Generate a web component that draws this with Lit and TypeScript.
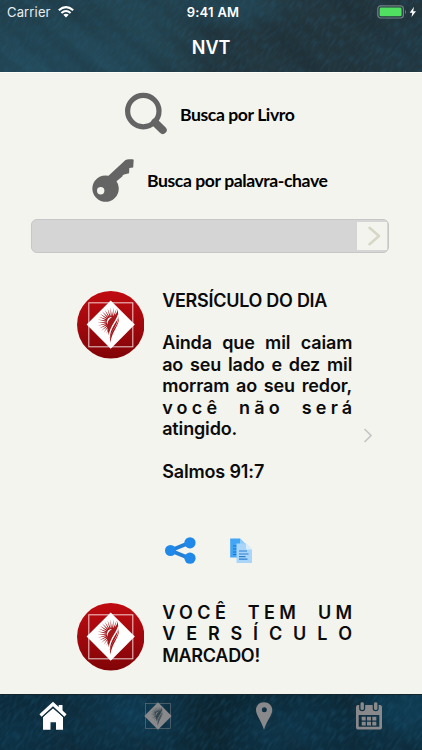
import { LitElement, html, svg, css } from "lit";
import { customElement, property } from "lit/decorators.js";

const rays = Array.from({ length: 16 }, (_, i) => {
  const a = ((70 + i * 12.5) * Math.PI) / 180;
  const dx = Math.cos(a);
  const dy = -Math.sin(a);
  const px = -dy * 0.65;
  const py = dx * 0.65;
  const cx = 34.8;
  const cy = 31;
  const len = 14.5 - Math.max(0, i - 10) * 0.4;
  return `M${cx + dx * 5 + px} ${cy + dy * 5 + py}L${cx + dx * len} ${cy + dy * len}L${cx + dx * 5 - px} ${cy + dy * 5 - py}Z`;
}).join("");

const emblem = (light: string, ink: string) => svg`
  <rect x="11.8" y="11.8" width="44" height="44" fill="none" stroke=${light} stroke-width="1.1" opacity=".75"/>
  <path d="M33.7 9.5 57.8 33.6 33.7 57.8 9.6 33.6Z" fill=${light}/>
  <path d=${rays} fill=${ink}/>
  <path d="M40.500 18C40.500 22 38 24.500 35 26C31 28.500 29.500 33 30.500 38C31 42.500 32.500 45.500 33.200 47.500C33.500 42 38 37 40 31.500C41.500 27 41.500 22 40.500 18Z" fill=${ink}/>
  <path d="M41.300 24C40 31 32.500 35.500 32.300 46" fill="none" stroke=${light} stroke-width="1.4"/>
  <path d="M42 25C43 34 35.500 39 33.300 51.500C32.300 45 34.800 41 37.500 37C40 33.500 41.600 30 42 25Z" fill=${ink}/>`;

@customElement("round-emblem")
export class RoundEmblem extends LitElement {
  static styles = css`
    :host { display: block; width: 67.5px; height: 67.5px; flex: none; }
    svg { display: block; width: 100%; height: 100%; }
  `;
  render() {
    return html`<svg viewBox="0 0 67.5 67.5">
      <defs><linearGradient id="red" x1="0" y1="0" x2="0" y2="1">
        <stop offset="0" stop-color="#c00b10"/><stop offset=".5" stop-color="#a1080d"/><stop offset="1" stop-color="#810407"/>
      </linearGradient></defs>
      <circle cx="33.75" cy="33.75" r="33.7" fill="url(#red)"/>
      ${emblem("#ffffff", "#a4171b")}
    </svg>`;
  }
}

@customElement("fabric-texture")
export class FabricTexture extends LitElement {
  @property() tone = "top";
  static styles = css`
    :host { display: block; position: absolute; inset: 0; overflow: hidden; }
    svg { display: block; width: 100%; height: 100%; }
    .top { background:
      radial-gradient(ellipse 130px 45px at 45px 60px, rgba(38, 88, 110, .4), transparent),
      radial-gradient(ellipse 70px 26px at 235px 8px, rgba(36, 88, 110, .5), transparent),
      radial-gradient(ellipse 60px 40px at 405px 50px, rgba(32, 66, 84, .4), transparent),
      linear-gradient(100deg, #22424f 0%, #244552 37%, #23373f 52%, #23343b 100%); }
    .bottom { background:
      radial-gradient(ellipse 70px 40px at 130px 20px, rgba(16, 66, 94, .65), transparent),
      radial-gradient(ellipse 70px 40px at 285px 35px, rgba(16, 66, 94, .6), transparent),
      radial-gradient(ellipse 60px 40px at 405px 15px, rgba(16, 70, 98, .7), transparent),
      radial-gradient(ellipse 60px 30px at 20px 40px, rgba(12, 56, 80, .6), transparent),
      linear-gradient(90deg, #0c2c3d, #0d2e3f 40%, #0b2633 50%, #0d2e3f); }
  `;
  render() {
    return html`<svg class=${this.tone} viewBox="0 0 422 72" preserveAspectRatio="xMinYMin slice">
      <defs>
        <filter id="weave" x="0" y="0" width="100%" height="100%" color-interpolation-filters="sRGB">
          <feTurbulence type="fractalNoise" baseFrequency=".13 .36" numOctaves="1" seed="4"/>
          <feColorMatrix values="0 0 0 0 .14  0 0 0 0 .38  0 0 0 0 .5  2.4 0 0 0 -1"/>
        </filter>
        <filter id="folds" x="0" y="0" width="100%" height="100%" color-interpolation-filters="sRGB">
          <feTurbulence type="fractalNoise" baseFrequency=".012 .06" numOctaves="1" seed="9"/>
          <feColorMatrix values="0 0 0 0 .09  0 0 0 0 .13  0 0 0 0 .16  2.5 0 0 0 -1.1"/>
        </filter>
      </defs>
      <rect x="-300" y="-400" width="1000" height="900" transform="rotate(-55 211 36)" filter="url(#weave)" opacity=".32"/>
      <rect x="-300" y="-400" width="1000" height="900" transform="rotate(40 211 36)" filter="url(#folds)" opacity=".3"/>
    </svg>`;
  }
}

@customElement("app-root")
export class AppRoot extends LitElement {
  static styles = css`
    :host {
      display: flex; flex-direction: column; width: 422px; height: 750px; overflow: hidden;
      box-sizing: border-box; background: #f3f4ee; color: #0b0b0b;
      font-family: Inter, "Liberation Sans", sans-serif;
    }
    svg { display: block; flex: none; }
    header { position: relative; height: 73px; flex: none; color: #fff; border-bottom: 1px solid #fcfbf5; box-sizing: border-box; }
    .status { position: relative; display: grid; grid-template-columns: 1fr auto 1fr; align-items: center; height: 24px; padding: 0 5px 0 7px; font-size: 13px; line-height: 24px; }
    .left, .right { display: flex; align-items: center; }
    .left { gap: 7px; color: #e8edef; letter-spacing: .15px; }
    .right { justify-content: flex-end; }
    .clock { font-weight: 600; letter-spacing: .25px; padding-left: 2px; }
    h1 { position: relative; margin: 13px 0 0; text-align: center; font-size: 18px; font-weight: 600; line-height: 22px; letter-spacing: -.1px; }
    main { flex: 1; display: flex; flex-direction: column; min-height: 0; }
    .action { display: flex; align-items: center; font-family: Lato, sans-serif; font-weight: 700; font-size: 17.6px; line-height: 22px; color: #000; white-space: nowrap; letter-spacing: -.42px; }
    .action span { padding-top: 2px; }
    .book { padding: 19px 0 0 124px; gap: 13px; height: 43px; }
    .keyword { padding: 23px 0 0 91px; gap: 13px; height: 44px; }
    .search { display: flex; justify-content: flex-end; margin: 17px 33px 0 30.5px; height: 34px; box-sizing: border-box; border: 1.5px solid #c6c7c6; border-radius: 6px; background: #d5d5d5; padding: 2px 1px 2px 0; }
    .go { width: 30px; background: #f3f4ee; display: flex; align-items: center; justify-content: center; padding-left: 1px; box-sizing: border-box; }
    .go svg { margin-left: 2px; }
    .card { display: grid; grid-template-columns: 67.5px 190px 1fr; column-gap: 18px; padding-left: 76.7px; }
    .daily { margin-top: 36px; height: 194px; }
    .tools { display: flex; gap: 34px; margin-top: 54px; padding-left: 165px; height: 27px; align-items: center; }
    .marked { margin-top: 37px; }
    .card round-emblem { margin-top: 2px; }
    .copy { padding-top: .6px; font-size: 18px; line-height: 21.4px; font-weight: 560; letter-spacing: -.15px; white-space: nowrap; }
    .marked .copy { padding-top: 1px; }
    .copy p { margin: 0; }
    .copy p + p { margin-top: 21.4px; }
    .full { display: block; text-align: justify; text-align-last: justify; }
    .voce { letter-spacing: 4.2px; margin-right: -4.2px; }
    .tem { letter-spacing: 4.4px; margin-right: -4.4px; }
    .wide { display: flex; justify-content: space-between; letter-spacing: 0; }
    .title { letter-spacing: -.28px; }
    .more { align-self: start; margin: 139px 0 0 -7px; }
    nav { position: relative; flex: none; height: 56px; box-sizing: border-box; border-top: 1px solid #14252c; display: grid; grid-template-columns: repeat(4, 1fr); justify-items: center; }
    nav svg { position: relative; }
    .tab-emblem { margin-top: 7px; }
  `;

  render() {
    return html`
      <header>
        <fabric-texture tone="top"></fabric-texture>
        <div class="status">
          <div class="left"><span>Carrier</span>
            <svg width="16" height="12" viewBox="0 0 16 12" fill="none" stroke="#fff" stroke-width="2.1">
              <path d="M.8 4.2Q8-2 15.2 4.2M3.4 7Q8 3 12.6 7"/>
              <path d="M8 11.5 5.3 8.8Q8 6.7 10.7 8.8Z" fill="#fff" stroke="none"/>
            </svg>
          </div>
          <span class="clock">9:41 AM</span>
          <div class="right">
            <svg width="40" height="14" viewBox="0 0 40 14">
              <rect x=".8" y=".8" width="25.6" height="12.2" rx="3" fill="none" stroke="#718085" stroke-width="1.2"/>
              <rect x="2.6" y="2.6" width="22" height="8.6" rx="1.3" fill="#51df62"/>
              <path d="M28 4.8Q30 7 28 9.2Z" fill="#718085"/>
              <path d="M37 1.800 32.700 7.700H35.300L34.500 12 39 6.200H36.200Z" fill="#fff"/>
            </svg>
          </div>
        </div>
        <h1>NVT</h1>
      </header>
      <main>
        <div class="action book">
          <svg width="43" height="43" viewBox="0 0 43 43" fill="none" stroke="#646464">
            <circle cx="19.3" cy="19.1" r="15.7" stroke-width="5.2"/>
            <path d="M31 30.500 38.700 38" stroke-width="8" stroke-linecap="round"/>
          </svg>
          <span>Busca por Livro</span>
        </div>
        <div class="action keyword">
          <svg width="43" height="43" viewBox="0 0 43 43" fill="#646464">
            <path fill-rule="evenodd" d="M17.500 16.800 34.500 1Q36 .2 38 .2H41.500Q43 .3 42.600 2L42.200 8.500L38.300 9.100L38.100 14.200L33 15.400L31.600 16.400L31.300 17.600L25.500 22.300A13.200 13.200 0 1 1 17.500 16.800ZM9.700 28A3.700 3.700 0 1 0 9.700 35.400A3.700 3.700 0 1 0 9.700 28Z"/>
          </svg>
          <span>Busca por palavra-chave</span>
        </div>
        <div class="search"><div class="go">
          <svg width="14" height="20" viewBox="0 0 14 20" fill="none" stroke="#d7d7c5" stroke-width="2.6" stroke-linecap="round" stroke-linejoin="round"><path d="M2.500 1.800 12 10 2.500 18.200"/></svg>
        </div></div>
        <section class="card daily">
          <round-emblem></round-emblem>
          <div class="copy">
            <p class="title">VERSÍCULO DO DIA</p>
            <p><span class="full">Ainda que mil caiam</span><span class="full">ao seu lado e dez mil</span><span class="full">morram ao seu redor,</span><span class="full voce">você não será</span><span>atingido.</span></p>
            <p>Salmos 91:7</p>
          </div>
          <svg class="more" width="10" height="15" viewBox="0 0 10 15" fill="none" stroke="#c5c6c5" stroke-width="1.7"><path d="M1.500 1 8 7.500 1.500 14"/></svg>
        </section>
        <div class="tools">
          <svg width="31" height="27" viewBox="0 0 31 27">
            <path d="M25 5.500 5.500 13.500 25 21.500" fill="none" stroke="#2380d6" stroke-width="4"/>
            <g fill="#2088e8"><circle cx="5.5" cy="13.5" r="5.5"/><circle cx="25" cy="5.8" r="5.6"/><circle cx="25" cy="21.2" r="5.6"/></g>
          </svg>
          <svg width="23" height="26" viewBox="0 0 23 26">
            <path d="M.2.5H10L15.500 6V19.500H.2Z" fill="#42a5f5"/><path d="M10 .5V6H15.500Z" fill="#90caf9"/>
            <path d="M3 8H7M3 11H7M3 14H7M3 16.500H7" stroke="#1976d2" stroke-width="1.1"/>
            <path d="M6.500 5.500H16L22 11.500V25H6.500Z" fill="#a9d5fa"/><path d="M16 5.500V11.500H22Z" fill="#d9edfe"/>
            <path d="M9 13H17M9 16H18.500M9 18.700H15.500M9 21.200H17.500" stroke="#2880d0" stroke-width="1.2"/>
          </svg>
        </div>
        <section class="card marked">
          <round-emblem></round-emblem>
          <div class="copy"><span class="full tem">VOCÊ TEM UM</span><span class="full wide">${[..."VERSÍCULO"].map((c) => html`<span>${c}</span>`)}</span><span class="title">MARCADO!</span></div>
        </section>
      </main>
      <nav>
        <fabric-texture tone="bottom"></fabric-texture>
        <svg width="28" height="40" viewBox="0 0 28 40" fill="#fff">
          <path d="M1.500 20.500 14 9 26.500 20.500" fill="none" stroke="#fff" stroke-width="3.2"/>
          <path d="M19.700 10H23.500V17L19.700 13.500ZM4 22 14 13.300 24 22V34.800H17V27.300H11.500V34.800H4Z"/>
          <path d="M2.800 22.700 14 12.500 25.200 22.700" fill="none" stroke="#0d2b3b" stroke-width=".9"/>
        </svg>
        <svg class="tab-emblem" width="28" height="28" viewBox="9 8.9 49.5 49.5">${emblem("#89898b", "#32444e")}</svg>
        <svg width="18" height="40" viewBox="0 0 18 40"><path fill="#89898b" fill-rule="evenodd" d="M9 7.200C4.200 7.200 1 10.700 1 15C1 20 6.500 26 9 34.800C11.500 26 17.300 20 17.300 15C17.300 10.700 13.800 7.200 9 7.200ZM9.300 12.300A2.500 2.500 0 1 1 9.300 17.300A2.500 2.500 0 1 1 9.300 12.300Z"/></svg>
        <svg width="28" height="40" viewBox="0 0 28 40">
          <path fill="#89898b" fill-rule="evenodd" d="M3 10H4.200V13.500Q4.200 16.300 7.200 16.300Q10.200 16.300 10.200 13.500V10H17.700V13.500Q17.700 16.300 20.700 16.300Q23.700 16.300 23.700 13.500V10H25Q27 10 27 12V32.500Q27 34.500 25 34.500H3Q1 34.500 1 32.500V12Q1 10 3 10ZM3.700 20V31.700H24.300V20Z"/>
          <path fill="#89898b" d="M5.500 8.500Q5.500 7.200 7.200 7.200Q8.900 7.200 8.900 8.500V13.500Q8.900 15 7.200 15Q5.500 15 5.500 13.500ZM19 8.500Q19 7.200 20.700 7.200Q22.400 7.200 22.400 8.500V13.500Q22.400 15 20.700 15Q19 15 19 13.500ZM6.700 21.700H10.700V25.500H6.700ZM12 21.700H16V25.500H12ZM17.300 21.700H21.300V25.500H17.300ZM6.700 26.700H10.700V30.500H6.700ZM12 26.700H16V30.500H12ZM17.300 26.700H21.300V30.500H17.300Z"/>
        </svg>
      </nav>`;
  }
}
